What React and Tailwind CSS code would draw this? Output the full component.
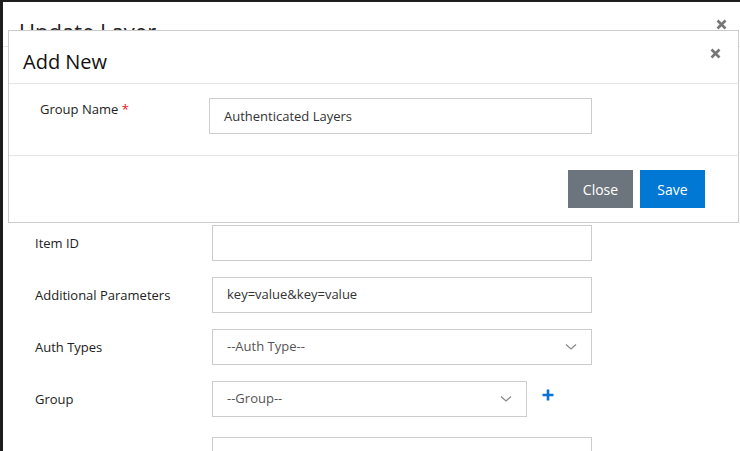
import React from "react";

const font = { fontFamily: '"Open Sans", "Noto Sans", sans-serif' };

function Chevron() {
  return (
    <svg width="12" height="8" viewBox="0 0 12 8" className="shrink-0">
      <path d="M1 1.5 L6 6 L11 1.5" fill="none" stroke="#888" strokeWidth="1.2" />
    </svg>
  );
}

function Times({ className }) {
  return (
    <svg width="11" height="11" viewBox="0 0 11 11" className={className}>
      <path d="M1.5 1.5 L9.5 9.5 M9.5 1.5 L1.5 9.5" stroke="#767676" strokeWidth="2.6" strokeLinecap="butt" />
    </svg>
  );
}

function Row({ label, children, className = "" }) {
  return (
    <div className={"flex items-center h-[36px] " + className}>
      <div className="w-[209px] shrink-0 pl-[32px] text-[13px] text-[#222] pt-[2px]">{label}</div>
      {children}
    </div>
  );
}

export default function App() {
  return (
    <div className="w-[740px] h-[451px] bg-[#1e1e1e] pl-[3px] pt-[2px] overflow-hidden relative" style={font}>
      <div className="bg-white h-full w-full flex flex-col">
        <div className="h-[52px] border-b border-[#e5e5e5] flex items-start justify-between pl-[16px] pr-[13px]">
          <div className="text-[22px] text-[#222] pt-[14px] leading-[30px]">Update Layer</div>
          <Times className="mt-[17px]" />
        </div>
        <div className="flex flex-col gap-[16px] pt-[178px]">
          <Row label="Item ID">
            <div className="w-[380px] h-[36px] shrink-0 border border-[#cccccc]" />
          </Row>
          <Row label="Additional Parameters">
            <div className="w-[380px] h-[36px] shrink-0 border border-[#cccccc] flex items-center px-[14px] text-[13px] text-[#333]">
              key=value&amp;key=value
            </div>
          </Row>
          <Row label="Auth Types">
            <div className="w-[380px] h-[36px] shrink-0 border border-[#cccccc] flex items-center justify-between pl-[14px] pr-[14px] text-[13px] text-[#555]">
              <span>--Auth Type--</span>
              <Chevron />
            </div>
          </Row>
          <Row label="Group">
            <div className="w-[315px] h-[36px] shrink-0 border border-[#cccccc] flex items-center justify-between pl-[14px] pr-[14px] text-[13px] text-[#555]">
              <span>--Group--</span>
              <Chevron />
            </div>
            <svg width="12" height="12" viewBox="0 0 12 12" className="ml-[15px] -mt-[8px] shrink-0">
              <path d="M6 0.5 V11.5 M0.5 6 H11.5" stroke="#0b72d6" strokeWidth="2.6" />
            </svg>
          </Row>
          <Row label="" className="mt-[4px]">
            <div className="w-[380px] h-[36px] shrink-0 border border-[#cccccc]" />
          </Row>
        </div>
      </div>

      <div className="absolute left-[8px] top-[30px] w-[731px] h-[193px] bg-white border border-[#cccccc] flex flex-col">
        <div className="h-[53px] border-b border-[#e5e5e5] flex items-center justify-between pl-[14px] pr-[17px]">
          <div className="text-[20px] text-[#111] leading-[28px] pt-[9px]">Add New</div>
          <Times className="-mt-[7px]" />
        </div>
        <div className="h-[72px] border-b border-[#e5e5e5] flex items-start pt-[14px]">
          <div className="w-[200px] shrink-0 pl-[31px] text-[13px] text-[#222] leading-[22px]">
            Group Name <span className="text-[#e8132a]">*</span>
          </div>
          <div className="w-[383px] h-[36px] shrink-0 border border-[#cccccc] flex items-center px-[14px] pt-[2px] text-[13px] text-[#333]">
            Authenticated Layers
          </div>
        </div>
        <div className="flex-1 flex items-start justify-end pt-[14px] pr-[33px] gap-[7px]">
          <button className="w-[65px] h-[38px] bg-[#6c757d] text-white text-[14px]">Close</button>
          <button className="w-[65px] h-[38px] bg-[#0078d4] text-white text-[14px]">Save</button>
        </div>
      </div>
    </div>
  );
}
